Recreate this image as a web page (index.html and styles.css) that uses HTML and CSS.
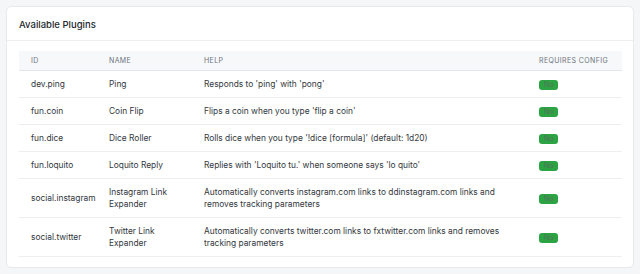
FILE: index.html
```html
<!DOCTYPE html>
<html>
<head>
<meta charset="utf-8">
<link rel="stylesheet" href="styles.css">
</head>
<body>
<div class="card">
  <div class="card-header">Available Plugins</div>
  <div class="card-body">
    <table class="plugins">
      <colgroup>
        <col class="c-id"><col class="c-name"><col class="c-help"><col class="c-cfg">
      </colgroup>
      <thead>
        <tr><th>ID</th><th>Name</th><th>Help</th><th>Requires Config</th></tr>
      </thead>
      <tbody>
        <tr><td>dev.ping</td><td>Ping</td><td>Responds to 'ping' with 'pong'</td><td><span class="badge">No</span></td></tr>
        <tr><td>fun.coin</td><td>Coin Flip</td><td>Flips a coin when you type 'flip a coin'</td><td><span class="badge">No</span></td></tr>
        <tr><td>fun.dice</td><td>Dice Roller</td><td>Rolls dice when you type '!dice [formula]' (default: 1d20)</td><td><span class="badge">No</span></td></tr>
        <tr><td>fun.loquito</td><td>Loquito Reply</td><td>Replies with 'Loquito tu.' when someone says 'lo quito'</td><td><span class="badge">No</span></td></tr>
        <tr><td>social.instagram</td><td>Instagram Link Expander</td><td>Automatically converts instagram.com links to ddinstagram.com links and removes tracking parameters</td><td><span class="badge">No</span></td></tr>
        <tr><td>social.twitter</td><td>Twitter Link Expander</td><td>Automatically converts twitter.com links to fxtwitter.com links and removes tracking parameters</td><td><span class="badge">No</span></td></tr>
      </tbody>
    </table>
  </div>
</div>
</body>
</html>
```
FILE: styles.css
```css
html, body {
  margin: 0;
  padding: 0;
  background: #f5f6f8;
}
body {
  padding: 6px;
  font-family: Inter, "Noto Sans", sans-serif;
  color: #212529;
}
.card {
  background: #fff;
  border: 1px solid #e7e9ec;
  border-radius: 5px;
  height: 262px;
  box-sizing: border-box;
}
.card-header {
  height: 34px;
  box-sizing: border-box;
  padding: 1px 12px 0;
  display: flex;
  align-items: center;
  font-size: 9.5px;
  font-weight: 500;
  color: #23272b;
  border-bottom: 1px solid #eceef1;
}
.card-body {
  padding: 10px 12px 0;
}
.plugins {
  width: 603px;
  table-layout: fixed;
  border-collapse: collapse;
  font-size: 8.4px;
  line-height: 12px;
}
.c-id { width: 78px; }
.c-name { width: 95px; }
.c-help { width: 335px; }
.c-cfg { width: 95px; }
.plugins th {
  background: #f7f8fa;
  text-align: left;
  font-weight: 400;
  font-size: 7px;
  letter-spacing: 0.38px;
  text-transform: uppercase;
  color: #6c737a;
  height: 19px;
  padding: 0 12px;
  border-bottom: 1px solid #e3e6ea;
  white-space: nowrap;
}
.plugins td {
  padding: 7px 12px;
  vertical-align: middle;
  border-bottom: 1px solid #eceef1;
  color: #33383d;
}
.plugins td:first-child {
  white-space: nowrap;
}
.badge {
  display: inline-block;
  background: #2ca444;
  color: #56705b;
  font-size: 7px;
  line-height: 10px;
  height: 10px;
  padding: 0 5px;
  border-radius: 3px;
  vertical-align: middle;
}
```
